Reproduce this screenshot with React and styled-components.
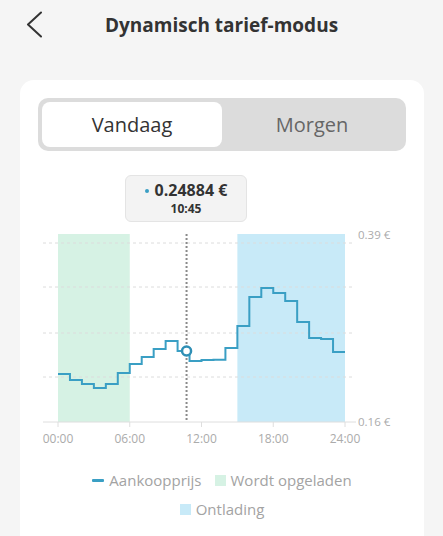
import React, { useState } from "react";
import styled, { createGlobalStyle } from "styled-components";

const GlobalStyle = createGlobalStyle`
  html, body {
    margin: 0;
    padding: 0;
    background: #f5f5f5;
    font-family: "Open Sans", "Liberation Sans", sans-serif;
    color: #333;
  }
`;

const Page = styled.div`
  width: 443px;
  min-height: 536px;
  overflow: hidden;
`;

const Header = styled.header`
  display: grid;
  grid-template-columns: 60px 1fr 60px;
  align-items: center;
  height: 50px;
`;

const BackButton = styled.button`
  display: flex;
  align-items: center;
  justify-content: flex-start;
  padding: 0 0 0 26px;
  border: none;
  background: none;
  height: 50px;
  cursor: pointer;
`;

const Title = styled.h1`
  margin: 0;
  text-align: center;
  font-size: 19px;
  font-weight: 700;
  color: #333;
`;

const Card = styled.section`
  margin: 30px 19px 0 20px;
  padding: 18px 18px 0;
  background: #fff;
  border-radius: 14px 14px 0 0;
  min-height: 460px;
  box-sizing: border-box;
`;

const Segmented = styled.div`
  display: grid;
  grid-template-columns: 1fr 1fr;
  height: 53px;
  padding: 4px;
  box-sizing: border-box;
  background: #dcdcdc;
  border-radius: 10px;
`;

const Segment = styled.button`
  border: none;
  border-radius: 8px;
  font-family: inherit;
  font-size: 20px;
  background: ${(p) => (p.$active ? "#fff" : "transparent")};
  color: ${(p) => (p.$active ? "#333" : "#666")};
  cursor: pointer;
`;

const ChartWrap = styled.div`
  position: relative;
  height: 300px;
`;

const Tooltip = styled.div`
  position: absolute;
  top: 24px;
  left: 87px;
  width: 122px;
  height: 47px;
  box-sizing: border-box;
  display: flex;
  flex-direction: column;
  align-items: center;
  justify-content: center;
  gap: 3px;
  background: #f3f3f3;
  border: 1px solid #e4e4e4;
  border-radius: 6px;
`;

const TipValue = styled.div`
  display: flex;
  align-items: center;
  gap: 6px;
  font-size: 16px;
  font-weight: 700;
  color: #333;
  line-height: 17px;
`;

const Dot = styled.span`
  width: 4px;
  height: 4px;
  border-radius: 50%;
  background: #3a9fc4;
`;

const TipTime = styled.div`
  font-size: 12px;
  font-weight: 700;
  color: #333;
  line-height: 13px;
`;

const Legend = styled.div`
  display: flex;
  flex-direction: column;
  align-items: center;
  gap: 9px;
  padding-top: 19px;
`;

const LegendRow = styled.div`
  display: flex;
  align-items: center;
  gap: 13px;
`;

const LegendItem = styled.div`
  display: flex;
  align-items: center;
  gap: 5px;
  font-size: 15px;
  color: #a3a3a3;
  line-height: 20px;
`;

const Swatch = styled.span`
  width: ${(p) => (p.$line ? "12px" : "11px")};
  height: ${(p) => (p.$line ? "3px" : "11px")};
  border-radius: ${(p) => (p.$line ? "1px" : "0")};
  background: ${(p) => p.$color};
`;

const LINE = "#3a9fc4";
const GREEN = "#d6f2e4";
const BLUE = "#c8eaf8";

const prices = [
  0.2201, 0.2126, 0.2076, 0.2026, 0.2076, 0.2213, 0.2326, 0.2414, 0.2514,
  0.2614, 0.24884, 0.2363, 0.2376, 0.2380, 0.2526, 0.2802, 0.3164, 0.3277,
  0.3215, 0.3114, 0.2852, 0.2651, 0.2639, 0.2476,
];

const X0 = 20;
const X1 = 307;
const TOP = 83;
const BASE = 271;
const hx = (h) => X0 + (h * (X1 - X0)) / 24;
const py = (p) => BASE - (p - 0.16) * 799;

const stepPath = () => {
  let d = `M${hx(0)},${py(prices[0])}`;
  prices.forEach((p, i) => {
    if (i > 0) d += ` V${py(p)}`;
    d += ` H${hx(i + 1)}`;
  });
  return d;
};

const PriceChart = () => {
  const cursorX = hx(10.75);
  const grid = [92, 136, 182, 226];
  return (
    <svg width="367" height="300" style={{ display: "block" }}>
      <rect x={hx(0)} y={TOP} width={hx(6) - hx(0)} height={BASE - TOP} fill={GREEN} />
      <rect x={hx(15)} y={TOP} width={hx(24) - hx(15)} height={BASE - TOP} fill={BLUE} />
      {grid.map((y) => (
        <line key={y} x1="5" x2="315" y1={y} y2={y} stroke="#dcdcdc" strokeWidth="1" strokeDasharray="3 3" />
      ))}
      <line x1="5" x2="318" y1={BASE} y2={BASE} stroke="#dedede" strokeWidth="1" />
      {[0, 6, 12, 18, 24].map((h) => (
        <g key={h}>
          <line x1={hx(h)} x2={hx(h)} y1={BASE} y2={BASE + 5} stroke="#dedede" />
          <text x={hx(h)} y={BASE + 21} textAnchor="middle" fontSize="12" fill="#ababab">
            {String(h).padStart(2, "0")}:00
          </text>
        </g>
      ))}
      <text x="320" y={TOP + 5} fontSize="11.5" fill="#ababab">0.39 €</text>
      <text x="320" y={BASE + 4} fontSize="11.5" fill="#ababab">0.16 €</text>
      <line x1={cursorX} x2={cursorX} y1={TOP} y2={BASE} stroke="#8a8a8a" strokeWidth="2" strokeDasharray="2 2" />
      <path d={stepPath()} fill="none" stroke={LINE} strokeWidth="2" />
      <circle cx={cursorX} cy={py(0.24884)} r="4.5" fill="#fff" stroke="#2f8fb5" strokeWidth="2.5" />
    </svg>
  );
};

const App = () => {
  const [day, setDay] = useState("today");
  return (
    <Page>
      <GlobalStyle />
      <Header>
        <BackButton aria-label="Terug">
          <svg width="16" height="28" viewBox="0 0 16 28">
            <path d="M15 1.5 L2 13.5 L15 25.5" fill="none" stroke="#333" strokeWidth="2" strokeLinecap="round" strokeLinejoin="round" />
          </svg>
        </BackButton>
        <Title>Dynamisch tarief-modus</Title>
        <div />
      </Header>
      <Card>
        <Segmented>
          <Segment $active={day === "today"} onClick={() => setDay("today")}>Vandaag</Segment>
          <Segment $active={day === "tomorrow"} onClick={() => setDay("tomorrow")}>Morgen</Segment>
        </Segmented>
        <ChartWrap>
          <Tooltip>
            <TipValue>
              <Dot />
              0.24884 €
            </TipValue>
            <TipTime>10:45</TipTime>
          </Tooltip>
          <PriceChart />
        </ChartWrap>
        <Legend>
          <LegendRow>
            <LegendItem>
              <Swatch $line $color={LINE} />
              Aankoopprijs
            </LegendItem>
            <LegendItem>
              <Swatch $color={GREEN} />
              Wordt opgeladen
            </LegendItem>
          </LegendRow>
          <LegendRow>
            <LegendItem>
              <Swatch $color={BLUE} />
              Ontlading
            </LegendItem>
          </LegendRow>
        </Legend>
      </Card>
    </Page>
  );
};

export default App;
